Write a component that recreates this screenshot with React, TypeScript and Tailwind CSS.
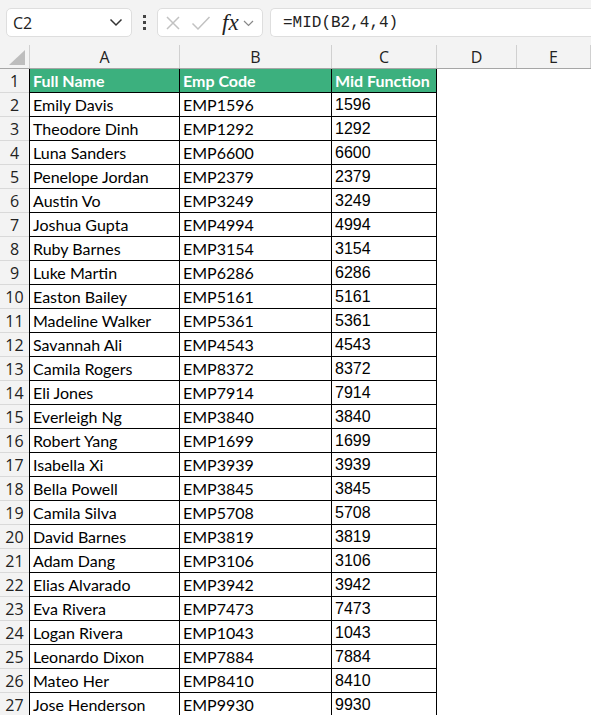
import React from 'react';

const rows = [
  ['Emily Davis', 'EMP1596'],
  ['Theodore Dinh', 'EMP1292'],
  ['Luna Sanders', 'EMP6600'],
  ['Penelope Jordan', 'EMP2379'],
  ['Austin Vo', 'EMP3249'],
  ['Joshua Gupta', 'EMP4994'],
  ['Ruby Barnes', 'EMP3154'],
  ['Luke Martin', 'EMP6286'],
  ['Easton Bailey', 'EMP5161'],
  ['Madeline Walker', 'EMP5361'],
  ['Savannah Ali', 'EMP4543'],
  ['Camila Rogers', 'EMP8372'],
  ['Eli Jones', 'EMP7914'],
  ['Everleigh Ng', 'EMP3840'],
  ['Robert Yang', 'EMP1699'],
  ['Isabella Xi', 'EMP3939'],
  ['Bella Powell', 'EMP3845'],
  ['Camila Silva', 'EMP5708'],
  ['David Barnes', 'EMP3819'],
  ['Adam Dang', 'EMP3106'],
  ['Elias Alvarado', 'EMP3942'],
  ['Eva Rivera', 'EMP7473'],
  ['Logan Rivera', 'EMP1043'],
  ['Leonardo Dixon', 'EMP7884'],
  ['Mateo Her', 'EMP8410'],
  ['Jose Henderson', 'EMP9930'],
];

const cellFont = "font-['Lato','Liberation_Sans',sans-serif] text-[16px] pt-[1px]";

const App = () => {
  return (
    <div className="w-[591px] h-[715px] overflow-hidden bg-white text-black">
      {/* Formula bar */}
      <div className="h-[45px] bg-[#f3f3f3] flex items-start pt-[8px] pl-[6px] gap-[7px]">
        <div className="w-[126px] h-[29px] bg-white border border-[#dedede] rounded-[5px] flex items-center justify-between pl-[6px] pr-[8px]">
          <span className="text-[16px] font-['Open_Sans',sans-serif] text-[#222]">C2</span>
          <svg width="14" height="9" viewBox="0 0 14 9" fill="none" stroke="#333" strokeWidth="1.5">
            <path d="M1.5 1.5 L7 7 L12.5 1.5" />
          </svg>
        </div>
        <div className="w-[11px] h-[29px] flex flex-col items-center justify-center gap-[3px]">
          <span className="w-[3px] h-[3px] bg-[#444]" />
          <span className="w-[3px] h-[3px] bg-[#444]" />
          <span className="w-[3px] h-[3px] bg-[#444]" />
        </div>
        <div className="w-[106px] h-[29px] bg-white border border-[#dedede] rounded-[5px] flex items-center pl-[7px] pr-[4px]">
          <svg width="16" height="16" viewBox="0 0 16 16" fill="none" stroke="#c2c2c2" strokeWidth="1.5">
            <path d="M2 2 L14 14 M14 2 L2 14" />
          </svg>
          <svg className="ml-[10px]" width="20" height="16" viewBox="0 0 20 16" fill="none" stroke="#c2c2c2" strokeWidth="1.5">
            <path d="M1.5 8.5 L7 14 L18.5 2" />
          </svg>
          <span className="ml-[11px] text-[23px] leading-none italic font-['Liberation_Serif',serif] text-[#222]">fx</span>
          <svg className="ml-[4px] mt-[2px]" width="11" height="7" viewBox="0 0 11 7" fill="none" stroke="#888" strokeWidth="1.2">
            <path d="M1 1 L5.5 5.5 L10 1" />
          </svg>
        </div>
        <div className="flex-1 h-[29px] bg-white border border-[#dedede] border-r-0 rounded-l-[5px] flex items-center pl-[12px]">
          <span className="text-[16px] font-['Liberation_Mono',monospace] text-[#222]">=MID(B2,4,4)</span>
        </div>
      </div>

      {/* Column headers */}
      <div className="flex h-[24px] bg-[#f3f3f3] border-b border-[#a6a6a6] font-['Open_Sans',sans-serif] text-[16px] text-[#222]">
        <div className="w-[30px] border-r border-[#d0d0d0] flex items-end justify-end pb-[3px] pr-[4px]">
          <svg width="16" height="15" viewBox="0 0 16 15">
            <path d="M16 0 L16 15 L0 15 Z" fill="#bdbdbd" />
          </svg>
        </div>
        {[
          ['A', 'w-[150px]'],
          ['B', 'w-[152px]'],
          ['C', 'w-[105px]'],
          ['D', 'w-[80px]'],
          ['E', 'flex-1'],
        ].map(([label, w]) => (
          <div key={label} className={`${w} border-r border-[#d0d0d0] flex items-center justify-center`}>
            {label}
          </div>
        ))}
      </div>

      {/* Header row */}
      <div className="flex h-[24px]">
        <div className="w-[29px] bg-[#f3f3f3] border-b border-[#d9d9d9] flex items-center justify-center text-[16px] font-['Open_Sans',sans-serif] text-[#222]">
          1
        </div>
        <div className={`w-[151px] bg-[#3cb07e] border-l border-r border-b border-black flex items-center pl-[3px] text-white font-bold ${cellFont}`}>
          Full Name
        </div>
        <div className={`w-[152px] bg-[#3cb07e] border-r border-b border-black flex items-center pl-[3px] text-white font-bold ${cellFont}`}>
          Emp Code
        </div>
        <div className={`w-[105px] bg-[#3cb07e] border-r border-b border-black flex items-center pl-[3px] text-white font-bold ${cellFont}`}>
          Mid Function
        </div>
      </div>

      {/* Data rows */}
      {rows.map(([name, code], i) => (
        <div key={code} className="flex h-[24px]">
          <div className="w-[29px] bg-[#f3f3f3] border-b border-[#d9d9d9] flex items-center justify-center text-[16px] font-['Open_Sans',sans-serif] text-[#222]">
            {i + 2}
          </div>
          <div className={`w-[151px] border-l border-r border-b border-black flex items-center pl-[3px] ${cellFont}`}>
            {name}
          </div>
          <div className={`w-[152px] border-r border-b border-black flex items-center pl-[3px] ${cellFont}`}>
            {code}
          </div>
          <div className="w-[105px] border-r border-b border-black flex items-center pl-[3px] pt-[1px] text-[16px] font-['Liberation_Sans',sans-serif]">
            {code.slice(3)}
          </div>
        </div>
      ))}
    </div>
  );
};

export default App;
